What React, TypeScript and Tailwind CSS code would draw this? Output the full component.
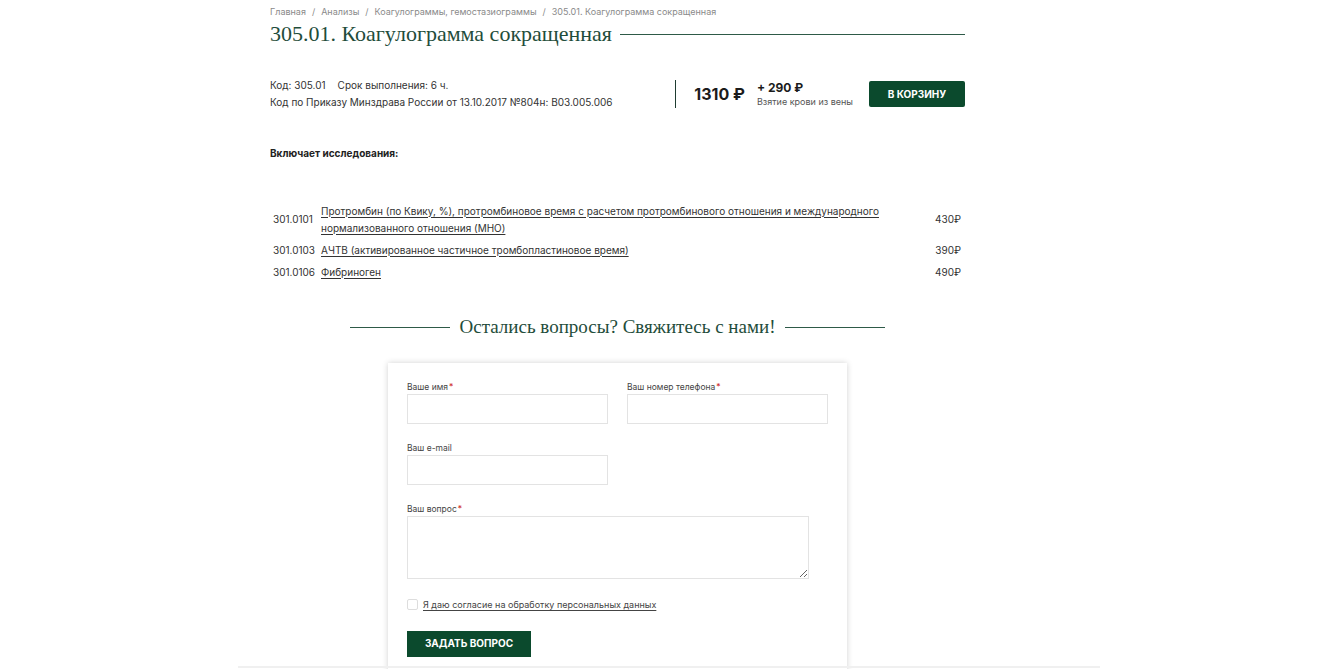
import React from "react";

const sans = "font-['Inter','Liberation_Sans',sans-serif]";
const serif = "font-['Liberation_Serif','DejaVu_Serif',serif]";

type Study = {
  code: string;
  title: React.ReactNode;
  price: string;
};

const studies: Study[] = [
  {
    code: "301.0101",
    title: (
      <>
        Протромбин (по Квику, %), протромбиновое время с расчетом протромбинового отношения и международного
        <br />
        нормализованного отношения (МНО)
      </>
    ),
    price: "430₽",
  },
  {
    code: "301.0103",
    title: "АЧТВ (активированное частичное тромбопластиновое время)",
    price: "390₽",
  },
  { code: "301.0106", title: "Фибриноген", price: "490₽" },
];

function Field({
  label,
  required,
  className,
}: {
  label: string;
  required?: boolean;
  className?: string;
}) {
  return (
    <div className={className}>
      <label className="block text-[8.5px] leading-[12px] text-[#444]">
        {label}
        {required && <span className="ml-[1px] text-[#d0312d]">*</span>}
      </label>
      <input
        type="text"
        className="mt-[1px] block h-[30px] w-[201px] border border-[#e3e3e3] bg-white outline-none"
      />
    </div>
  );
}

export default function App() {
  return (
    <div className={`relative h-[669px] overflow-hidden bg-white ${sans} text-[#222]`}>
      <div className="ml-[270px] w-[695px]">
        {/* breadcrumbs */}
        <nav className="flex gap-[6px] pt-[6px] text-[9px] leading-[12px] text-[#8a8a8a]">
          <span>Главная</span>
          <span>/</span>
          <span>Анализы</span>
          <span>/</span>
          <span>Коагулограммы, гемостазиограммы</span>
          <span>/</span>
          <span>305.01. Коагулограмма сокращенная</span>
        </nav>

        <div className="mt-[3px] flex items-center gap-[8px]">
          <h1 className={`${serif} whitespace-nowrap text-[22px] leading-[26px] text-[#1f4d3b]`}>
            305.01. Коагулограмма сокращенная
          </h1>
          <div className="h-px flex-1 bg-[#2e5a48]" />
        </div>

        {/* info row */}
        <div className="mt-[30px] flex items-center">
          <div className="flex-1 text-[10px] leading-[17px] text-[#333]">
            <div>
              Код: 305.01<span className="ml-[12px]">Срок выполнения: 6 ч.</span>
            </div>
            <div>Код по Приказу Минздрава России от 13.10.2017 №804н: В03.005.006</div>
          </div>
          <div className="h-[28px] w-px bg-[#1f3d31]" />
          <div className="ml-[18px] text-[16px] font-bold text-[#1b1b1b]">1310 ₽</div>
          <div className="ml-[12px]">
            <div className="text-[12px] font-bold leading-[14px] text-[#1b1b1b]">+ 290 ₽</div>
            <div className="text-[9px] leading-[13px] text-[#555]">Взятие крови из вены</div>
          </div>
          <button className="ml-[16px] h-[26px] w-[96px] rounded-[2px] bg-[#0b4a2d] text-[10px] font-bold text-white">
            В КОРЗИНУ
          </button>
        </div>

        <div className="mt-[35px] text-[10px] font-bold leading-[14px] text-[#222]">Включает исследования:</div>

        {/* studies */}
        <div className="mt-[40px] text-[10px] leading-[17px] text-[#333]">
          {studies.map((s) => (
            <div key={s.code} className="flex items-center py-[2.5px]">
              <div className="w-[51px] pl-[3px]">{s.code}</div>
              <div className="flex-1 underline underline-offset-2">{s.title}</div>
              <div className="w-[60px] pr-[4px] text-right">{s.price}</div>
            </div>
          ))}
        </div>

        {/* contact heading */}
        <div className="mt-[33px] flex items-center justify-center gap-[10px]">
          <div className="h-px w-[100px] bg-[#2e5a48]" />
          <h2 className={`${serif} text-[19px] leading-[22px] text-[#1f4d3b]`}>
            Остались вопросы? Свяжитесь с нами!
          </h2>
          <div className="h-px w-[100px] bg-[#2e5a48]" />
        </div>

        {/* form card */}
        <div className="mx-auto mt-[25px] w-[459px] bg-white px-[19px] pb-[20px] pt-[18px] shadow-[0_0_6px_rgba(0,0,0,0.18)]">
          <div className="flex gap-[19px]">
            <Field label="Ваше имя" required />
            <Field label="Ваш номер телефона" required />
          </div>
          <Field label="Ваш e-mail" className="mt-[18px]" />
          <div className="mt-[18px]">
            <label className="block text-[8.5px] leading-[12px] text-[#444]">
              Ваш вопрос<span className="ml-[1px] text-[#d0312d]">*</span>
            </label>
            <textarea className="mt-[1px] block h-[63px] w-[402px] border border-[#e3e3e3] outline-none" />
          </div>
          <label className="mt-[19px] flex items-center gap-[5px] text-[9px] text-[#444]">
            <span className="h-[11px] w-[11px] rounded-[2px] border border-[#ddd] bg-white" />
            <span className="underline underline-offset-2">Я даю согласие на обработку персональных данных</span>
          </label>
          <button className="mt-[19px] h-[26px] w-[124px] bg-[#0b4a2d] text-[10px] font-bold text-white">
            ЗАДАТЬ ВОПРОС
          </button>
        </div>
      </div>
      <div className="absolute bottom-[1px] left-[238px] h-[2px] w-[862px] bg-[#f0f0f0]" />
    </div>
  );
}
